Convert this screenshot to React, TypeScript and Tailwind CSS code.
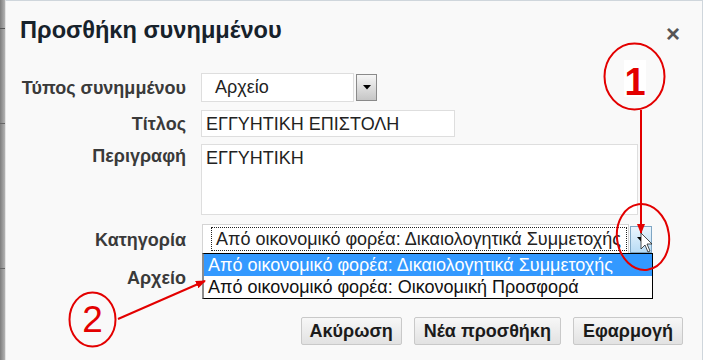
import React from "react";

const font = { fontFamily: '"Liberation Sans", Arial, sans-serif' };

function Tri() {
  return (
    <svg width="8" height="5" viewBox="0 0 8 5">
      <path d="M0 0 L8 0 L4 4.5 Z" fill="#000" />
    </svg>
  );
}

export default function App() {
  const cat = "Από οικονομικό φορέα: Δικαιολογητικά Συμμετοχής";
  return (
    <div className="relative w-[703px] h-[360px] overflow-hidden flex bg-[#f9f9f9] leading-[22px]" style={font}>
      {/* background strip behind the dialog */}
      <div className="w-[5px] h-full bg-gradient-to-r from-[#7e7e7e] to-[#b4b4b4] flex flex-col">
        <div className="h-[28px]" />
        <div className="h-px bg-[#555]" />
        <div className="h-[94px]" />
        <div className="h-px bg-[#666]" />
        <div className="h-[144px]" />
        <div className="h-px bg-[#666]" />
      </div>
      {/* dialog */}
      <div className="flex-1 h-full bg-[#f9f9f9] border-t border-r border-[#cfd6dc] border-l border-l-[#e4e4e4] flex flex-col">
        <div className="flex items-start justify-between pl-[14px] pr-[22px] pt-[15px] h-[71px]">
          <div className="text-[23.6px] font-bold text-[#17222b] leading-[28px]">Προσθήκη συνημμένου</div>
          <div className="text-[24px] font-bold text-[#555] leading-none mt-[6px]">×</div>
        </div>

        {/* row 1 */}
        <div className="flex items-center h-[30px]">
          <div className="w-[180px] text-right text-[18px] font-bold text-[#3a3a3a] mt-[2px]">Τύπος συνημμένου</div>
          <div className="ml-[15px] flex items-center">
            <div className="w-[153px] h-[29px] bg-white border border-[#dedede] pl-[13px] text-[18px] text-[#222] flex items-center">Αρχείο</div>
            <div className="ml-[2px] w-[21px] h-[27px] border border-[#8a8a8a] bg-gradient-to-b from-[#f6f6f6] to-[#c6c6c6] flex items-center justify-center">
              <Tri />
            </div>
          </div>
        </div>

        {/* row 2 */}
        <div className="flex items-center h-[27px] mt-[8px]">
          <div className="w-[180px] text-right text-[18px] font-bold text-[#3a3a3a]">Τίτλος</div>
          <div className="ml-[15px] w-[254px] h-[27px] bg-white border border-[#dedede] pl-[4px] text-[18px] text-[#222] flex items-center">ΕΓΓΥΗΤΙΚΗ ΕΠΙΣΤΟΛΗ</div>
        </div>

        {/* row 3 */}
        <div className="flex items-start h-[71px] mt-[7px]">
          <div className="w-[180px] text-right text-[18px] font-bold text-[#3a3a3a] mt-[1px]">Περιγραφή</div>
          <div className="ml-[15px] w-[437px] h-[71px] bg-white border border-[#dedede] pl-[4px] pt-[2px] text-[18px] text-[#222]">ΕΓΓΥΗΤΙΚΗ</div>
        </div>

        {/* row 4 */}
        <div className="flex items-center h-[30px] mt-[9px]">
          <div className="w-[180px] text-right text-[18px] font-bold text-[#3a3a3a] mt-[2px]">Κατηγορία</div>
          <div className="ml-[16px] flex items-center">
            <div className="w-[427px] h-[30px] bg-white border border-[#d4d4d4] pl-[8px] pr-[1px] py-[2px]">
              <div className="h-full border border-dotted border-[#222] pl-[4px] text-[18px] text-[#222] flex items-center overflow-hidden whitespace-nowrap">{cat}</div>
            </div>
            <div className="ml-[1px] w-[22px] h-[27px] border border-[#7fa6c4] bg-gradient-to-b from-[#eaf5fd] to-[#b9dcf5] flex items-center justify-center">
              <Tri />
            </div>
          </div>
        </div>

        {/* row 5 */}
        <div className="flex items-center h-[30px] mt-[9px]">
          <div className="w-[180px] text-right text-[18px] font-bold text-[#3a3a3a]">Αρχείο</div>
        </div>

        {/* buttons */}
        <div className="flex justify-end gap-[12px] pr-[19px] mt-[24px]">
          <div className="h-[28px] px-[8px] border border-[#c9c9c9] rounded-[2px] bg-gradient-to-b from-[#f7f7f7] to-[#e2e2e2] text-[18px] font-bold text-[#1b1b1b] flex items-center">Ακύρωση</div>
          <div className="h-[28px] px-[9px] border border-[#c9c9c9] rounded-[2px] bg-gradient-to-b from-[#f7f7f7] to-[#e2e2e2] text-[18px] font-bold text-[#1b1b1b] flex items-center">Νέα προσθήκη</div>
          <div className="h-[28px] px-[9px] border border-[#c9c9c9] rounded-[2px] bg-gradient-to-b from-[#f7f7f7] to-[#e2e2e2] text-[18px] font-bold text-[#1b1b1b] flex items-center">Εφαρμογή</div>
        </div>
      </div>

      {/* open dropdown list */}
      <div className="absolute left-[202px] top-[253px] w-[451px] h-[46px] bg-white border border-black border-l-2 border-l-[#8c8c8c] flex flex-col">
        <div className="h-[22px] bg-[#3399ff] text-white text-[18px] pl-[4px] flex items-center whitespace-nowrap">{cat}</div>
        <div className="h-[22px] text-[#111] text-[18px] pl-[4px] flex items-center whitespace-nowrap">Από οικονομικό φορέα: Οικονομική Προσφορά</div>
      </div>

      {/* annotations */}
      <svg className="absolute left-0 top-0 pointer-events-none" width="703" height="360" viewBox="0 0 703 360">
        <defs>
          <marker id="ah" markerWidth="10" markerHeight="8" refX="9" refY="4" orient="auto" markerUnits="userSpaceOnUse">
            <path d="M0 0 L10 4 L0 8 Z" fill="#e30000" />
          </marker>
        </defs>
        <ellipse cx="634.5" cy="76.5" rx="30" ry="33" fill="none" stroke="#e30000" strokeWidth="2" />
        <rect x="624" y="60" width="22" height="37" fill="#ffffff" />
        <text x="635" y="95" textAnchor="middle" fontSize="38" fontWeight="bold" fill="#e30000" fontFamily="Liberation Sans, Arial, sans-serif">1</text>
        <line x1="641" y1="110" x2="641" y2="233" stroke="#e30000" strokeWidth="2" markerEnd="url(#ah)" />
        <ellipse cx="643" cy="237" rx="26" ry="33" fill="none" stroke="#e30000" strokeWidth="2" transform="rotate(-8 643 237)" />
        {/* cursor */}
        <path d="M641 233 L641 249 L645 245 L648 252 L650 251 L647 244 L652 244 Z" fill="#fff" stroke="#222" strokeWidth="0.8" />
        <ellipse cx="92.5" cy="319.5" rx="23" ry="27" fill="none" stroke="#e30000" strokeWidth="2" />
        <text x="92.5" y="332" textAnchor="middle" fontSize="37" fill="#e30000" fontFamily="Liberation Sans, Arial, sans-serif">2</text>
        <line x1="118" y1="319" x2="205" y2="281" stroke="#e30000" strokeWidth="2" markerEnd="url(#ah)" />
      </svg>
    </div>
  );
}
